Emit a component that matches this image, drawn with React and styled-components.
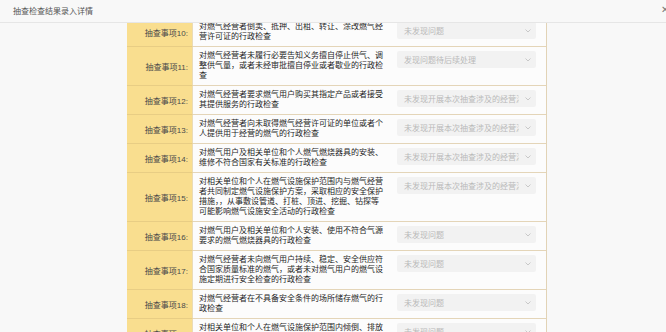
import React from 'react';
import styled, { createGlobalStyle } from 'styled-components';

const GlobalStyle = createGlobalStyle`
  html, body {
    margin: 0;
    padding: 0;
    background: #f8f8f8;
    font-family: "Liberation Sans", "Noto Sans CJK SC", sans-serif;
  }
  * { box-sizing: border-box; }
`;

const Modal = styled.div`
  display: flex;
  flex-direction: column;
  height: 100vh;
  overflow: hidden;
  background: #f8f8f8;
`;

const Header = styled.div`
  flex: 0 0 23px;
  display: flex;
  align-items: center;
  justify-content: space-between;
  padding: 0 0 2px 13px;
  border-bottom: 1px solid #e6e6e6;
  background: #f8f8f8;
`;

const Title = styled.span`
  font-size: 8px;
  color: #555;
`;

const Close = styled.span`
  font-size: 10px;
  color: #777;
  margin-right: -3px;
  line-height: 1;
`;

const Body = styled.div`
  flex: 1;
  overflow: hidden;
  padding-left: 127px;
`;

const Table = styled.div`
  width: 420px;
  margin-top: -5px;
  border-right: 1px solid #e2d3b6;
`;

const Row = styled.div`
  display: grid;
  grid-template-columns: 66px 1fr;
`;

const Label = styled.div`
  display: flex;
  align-items: center;
  justify-content: flex-end;
  padding-right: 4px;
  background: #f9de8f;
  border-bottom: 1px solid #e8cd84;
  border-right: 1px solid #eadbb6;
  font-size: 8px;
  color: #4a4a4a;
`;

const Cell = styled.div`
  display: flex;
  align-items: flex-start;
  gap: 12px;
  padding: 4px 10px 4px 6px;
  background: #fcfcfc;
  border-bottom: 1px solid #e4d5b8;
`;

const Desc = styled.div`
  flex: 0 0 186px;
  font-size: 8px;
  line-height: 10px;
  color: #1f1f1f;
`;

const Select = styled.div`
  flex: 0 0 139px;
  height: 17px;
  display: flex;
  align-items: center;
  padding: 0 5px 0 7px;
  background: #f2f2f2;
  border-radius: 2px;
`;

const Value = styled.span`
  flex: 0 0 115px;
  overflow: hidden;
  white-space: nowrap;
  font-size: 8px;
  color: #b9b9b9;
`;

const Chevron = styled.svg`
  margin-left: auto;
  width: 6px;
  height: 4px;
`;

const LONG = '未发现开展本次抽查涉及的经营活动';

const items = [
  { n: 10, text: '对燃气经营者倒卖、抵押、出租、转让、涂改燃气经营许可证的行政检查', value: '未发现问题' },
  { n: 11, text: '对燃气经营者未履行必要告知义务擅自停止供气、调整供气量，或者未经审批擅自停业或者歇业的行政检查', value: '发现问题待后续处理' },
  { n: 12, text: '对燃气经营者要求燃气用户购买其指定产品或者接受其提供服务的行政检查', value: LONG },
  { n: 13, text: '对燃气经营者向未取得燃气经营许可证的单位或者个人提供用于经营的燃气的行政检查', value: LONG },
  { n: 14, text: '对燃气用户及相关单位和个人燃气燃烧器具的安装、维修不符合国家有关标准的行政检查', value: LONG },
  { n: 15, text: '对相关单位和个人在燃气设施保护范围内与燃气经营者共同制定燃气设施保护方案，采取相应的安全保护措施，，从事敷设管道、打桩、顶进、挖掘、钻探等可能影响燃气设施安全活动的行政检查', value: LONG },
  { n: 16, text: '对燃气用户及相关单位和个人安装、使用不符合气源要求的燃气燃烧器具的行政检查', value: '未发现问题' },
  { n: 17, text: '对燃气经营者未向燃气用户持续、稳定、安全供应符合国家质量标准的燃气，或者未对燃气用户的燃气设施定期进行安全检查的行政检查', value: '未发现问题' },
  { n: 18, text: '对燃气经营者在不具备安全条件的场所储存燃气的行政检查', value: '未发现问题' },
  { n: 19, text: '对相关单位和个人在燃气设施保护范围内倾倒、排放腐蚀性物质的行政检查', value: '未发现问题' },
];

export default function App() {
  return (
    <>
      <GlobalStyle />
      <Modal>
        <Header>
          <Title>抽查检查结果录入详情</Title>
          <Close>✕</Close>
        </Header>
        <Body>
          <Table>
            {items.map((it) => (
              <Row key={it.n}>
                <Label>抽查事项{it.n}:</Label>
                <Cell>
                  <Desc>{it.text}</Desc>
                  <Select>
                    <Value>{it.value}</Value>
                    <Chevron viewBox="0 0 6 4">
                      <path d="M0.5 0.5 L3 3 L5.5 0.5" fill="none" stroke="#bdbdbd" strokeWidth="0.8" />
                    </Chevron>
                  </Select>
                </Cell>
              </Row>
            ))}
          </Table>
        </Body>
      </Modal>
    </>
  );
}
